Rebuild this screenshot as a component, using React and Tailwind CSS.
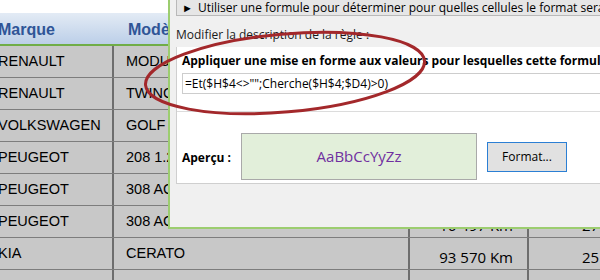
import React from 'react';

const rows = [
  { marque: 'RENAULT', modele: 'MODUS', km: '', prix: '' },
  { marque: 'RENAULT', modele: 'TWINGO', km: '', prix: '' },
  { marque: 'VOLKSWAGEN', modele: 'GOLF', km: '', prix: '' },
  { marque: 'PEUGEOT', modele: '208  1.2 PURETECH', km: '', prix: '' },
  { marque: 'PEUGEOT', modele: '308  ACTIVE', km: '', prix: '' },
  { marque: 'PEUGEOT', modele: '308  ACTIVE 1.6 HDI 92 5P', km: '16 497 Km', prix: '27 900 €' },
  { marque: 'KIA', modele: 'CERATO', km: '93 570 Km', prix: '25 990 €' },
  { marque: '', modele: '', km: '', prix: '' },
];

const cols = 'grid grid-cols-[116px_296px_119px_130px]';

function Sheet() {
  return (
    <div className="-ml-[2px] flex flex-col font-['Liberation_Sans',Arial,sans-serif]">
      <div className="h-[13px] bg-white" />
      {/* header */}
      <div className={`${cols} h-[33px] border-b-2 border-[#70ad47] bg-gradient-to-b from-[#e3ebf5] to-[#bccfe8] text-[16px] font-bold text-[#2f5597]`}>
        <div className="flex items-center pt-[2px]">Marque</div>
        <div className="flex items-center pl-[14px] pt-[2px]">Modèle</div>
        <div />
        <div />
      </div>
      {rows.map((r, i) => (
        <div key={i} className={`${cols} h-[32px] border-b border-[#7d7d7d] bg-[#c8c8c8] text-[14.5px] text-black`}>
          <div className="flex items-center border-r-2 border-[#6e6e6e]">{r.marque}</div>
          <div className="flex items-center whitespace-nowrap border-r-2 border-[#6e6e6e] pl-[12px]">{r.modele}</div>
          <div className="flex items-end justify-end border-r-2 border-[#6e6e6e] pb-[1px] pr-[14px] font-['Open_Sans',sans-serif] text-[15px]">{r.km}</div>
          <div className="flex items-end whitespace-nowrap pb-[1px] pl-[53px] font-['Open_Sans',sans-serif] text-[15px]">{r.prix}</div>
        </div>
      ))}
    </div>
  );
}

function Dialog() {
  return (
    <div className="absolute left-[168px] top-0 h-[229px] w-[460px] border-b-2 border-l-2 border-[#9ccd6f] bg-[#f0f0f0] font-['Open_Sans','Noto_Sans',sans-serif] text-[12px] text-black">
      <div className="ml-[6px] flex h-[16px] items-center gap-[5px] whitespace-nowrap border-b border-l border-[#b9b9b9] bg-[#e6e6e6] pl-[5px] leading-none">
        <span className="text-[11px]">►</span>
        <span>Utiliser une formule pour déterminer pour quelles cellules le format sera appliqué</span>
      </div>
      <div className="ml-[6px] mt-[10px] whitespace-nowrap text-[#1a1a1a]">Modifier la description de la règle :</div>
      <div className="ml-[6px] mt-[3px] h-[137px] border-b border-l border-[#cfcfcf] bg-white">
        <div className="h-[65px] border-b border-[#dcdcdc] pl-[5px] pt-[5px]">
          <div className="whitespace-nowrap font-bold">Appliquer une mise en forme aux valeurs pour lesquelles cette formule est vraie :</div>
          <div className="mt-[3px] flex h-[21px] items-center whitespace-nowrap border border-[#cdcdcd] pl-[2px]">=Et($H$4&lt;&gt;"";Cherche($H$4;$D4)&gt;0)</div>
        </div>
        <div className="flex items-center pl-[5px] pt-[21px]">
          <span className="w-[59px] shrink-0 whitespace-nowrap pt-[2px] font-bold">Aperçu :</span>
          <div className="flex h-[47px] w-[236px] shrink-0 items-center justify-center border border-[#a9a9a9] bg-[#e2efda] text-[15px] text-[#7030a0]">AaBbCcYyZz</div>
          <button className="ml-[10px] h-[30px] w-[80px] shrink-0 border border-[#2b7fd4] bg-[#e1e1e1] text-[12px]">Format...</button>
        </div>
      </div>
    </div>
  );
}

export default function App() {
  return (
    <div className="relative h-[280px] w-[600px] overflow-hidden bg-white">
      <Sheet />
      <Dialog />
      <svg className="pointer-events-none absolute left-0 top-0" width="600" height="280">
        <ellipse cx="285" cy="73" rx="140" ry="39" transform="rotate(-5 285 73)" fill="none" stroke="#a3282b" strokeWidth="3" />
      </svg>
    </div>
  );
}
